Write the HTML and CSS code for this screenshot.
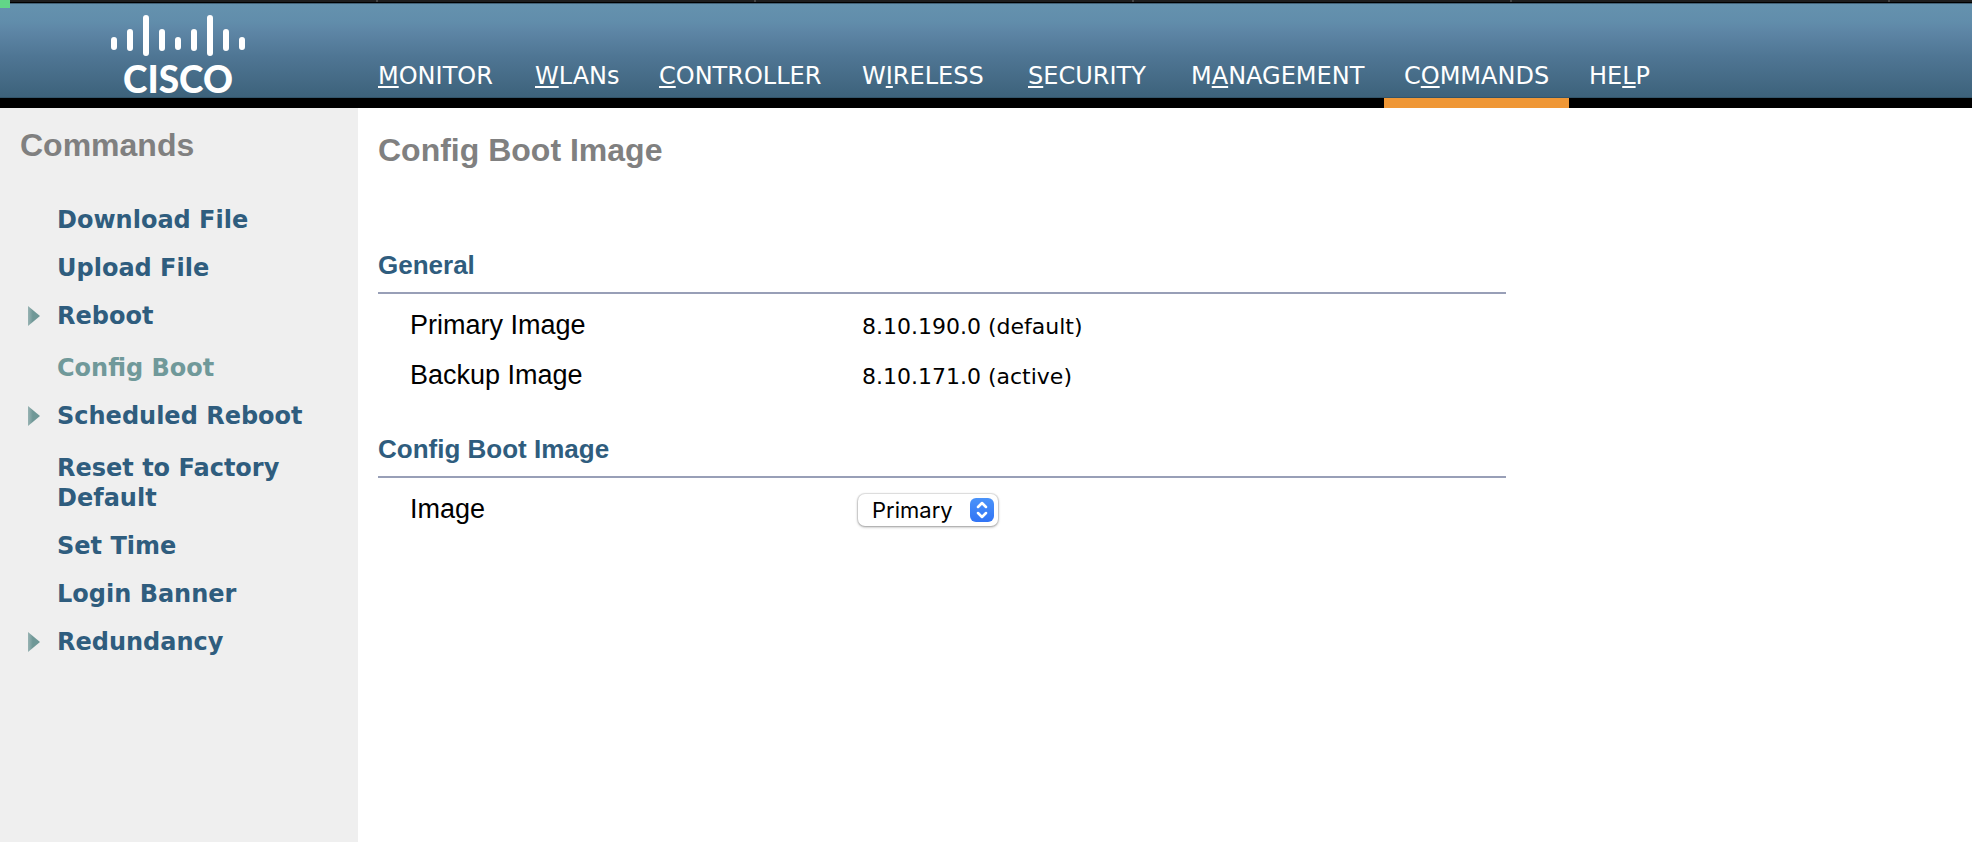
FILE: index.html
```html
<!DOCTYPE html>
<html lang="en">
<head>
<meta charset="utf-8">
<title>Config Boot Image</title>
<link rel="stylesheet" href="styles.css">
</head>
<body>
<div class="window-edge"><span></span><span></span><span></span><span></span><span></span><i class="marker"></i></div>
<header class="banner">
  <div class="brand">
    <svg class="bars" viewBox="0 0 134 46" aria-hidden="true">
      <path d="M3 27v7M19 19v16M35 5v35M51 19v16M67 27v7M83 19v16M99 5v35M115 19v16M131 27v7"/>
    </svg>
    <span class="wordmark">CISCO</span>
  </div>
  <nav class="menu">
    <a href="#"><u>M</u>ONITOR</a>
    <a href="#"><u>W</u>LANs</a>
    <a href="#"><u>C</u>ONTROLLER</a>
    <a href="#">W<u>I</u>RELESS</a>
    <a href="#"><u>S</u>ECURITY</a>
    <a href="#">M<u>A</u>NAGEMENT</a>
    <a href="#" class="active">C<u>O</u>MMANDS</a>
    <a href="#">HE<u>L</u>P</a>
  </nav>
</header>
<div class="page">
  <aside class="sidebar">
    <h2 class="title">Commands</h2>
    <ul class="links">
      <li><a href="#">Download File</a></li>
      <li><a href="#">Upload File</a></li>
      <li class="parent"><a href="#">Reboot</a></li>
      <li class="current"><a href="#">Config Boot</a></li>
      <li class="parent"><a href="#">Scheduled Reboot</a></li>
      <li><a href="#">Reset to Factory Default</a></li>
      <li><a href="#">Set Time</a></li>
      <li><a href="#">Login Banner</a></li>
      <li class="parent"><a href="#">Redundancy</a></li>
    </ul>
  </aside>
  <main class="content">
    <h1 class="title">Config Boot Image</h1>
    <section class="group">
      <h2 class="group-title">General</h2>
      <dl class="fields">
        <dt>Primary Image</dt><dd>8.10.190.0 (default)</dd>
        <dt>Backup Image</dt><dd>8.10.171.0 (active)</dd>
      </dl>
    </section>
    <section class="group">
      <h2 class="group-title">Config Boot Image</h2>
      <div class="fields">
        <label for="image">Image</label>
        <div class="picker">
          <select id="image"><option>Primary</option><option>Backup</option></select>
          <svg class="chevrons" viewBox="0 0 24 24" aria-hidden="true"><path d="M8 9l4-4 4 4M8 15l4 4 4-4"/></svg>
        </div>
      </div>
    </section>
  </main>
</div>
</body>
</html>
```
FILE: styles.css
```css
* { box-sizing: border-box; }
body {
  margin: 0;
  min-height: 100vh;
  display: flex;
  flex-direction: column;
  background: #fff;
  color: #000;
  font-family: "Liberation Sans", Arial, sans-serif;
}
a { color: inherit; text-decoration: none; }

.window-edge {
  position: relative;
  display: flex;
  height: 3px;
  background: #1e1e1e;
  border-bottom: 1px solid #000;
}
.window-edge span { flex: 0 0 378px; border-right: 2px solid #444; }
.marker {
  position: absolute;
  left: 0;
  top: 0;
  z-index: 1;
  width: 10px;
  height: 8px;
  background: #62d688;
}

.banner {
  display: flex;
  border-top: 1px solid #426176;
  background: linear-gradient(#6592ae 0, #618dab 18px, #5d85a5 28px, #4f7694 52px, #3d627b 93px, #284657 94px, #000 94px);
}
.brand {
  flex: 0 0 358px;
  display: flex;
  flex-direction: column;
  padding: 9px 0 0 111px;
}
.bars {
  display: block;
  width: 134px;
  height: 46px;
  fill: none;
  stroke: #fff;
  stroke-width: 6;
  stroke-linecap: round;
}
.wordmark {
  width: 134px;
  color: #fff;
  font: 900 37px/40px Lato, sans-serif;
  text-align: center;
}
.menu {
  display: grid;
  grid-template-columns: 157px 124px 203px 166px 163px 213px 185px 102px;
  color: #fff;
  font: 24px/30px "DejaVu Sans", Verdana, sans-serif;
}
.menu a {
  padding: 57px 0 7px 20px;
  border-bottom: 10px solid #000;
  white-space: nowrap;
}
.menu .active { border-color: #ef9736; }
.menu u { text-decoration-thickness: 2px; text-underline-offset: 2px; text-decoration-skip-ink: none; }

.page { flex: 1; display: flex; }
.title { margin: 0; color: #808080; font-size: 32px; line-height: 36px; }
.sidebar { flex: 0 0 358px; padding: 19px 20px; background: #efefef; }
.links {
  display: flex;
  flex-direction: column;
  gap: 18px;
  margin: 0;
  padding: 42px 0 0;
  list-style: none;
  color: #2f5d7e;
  font: bold 24px/30px "DejaVu Sans", Verdana, sans-serif;
}
.links li { padding-left: 37px; }
.links .current { color: #70999a; }
.links .parent {
  display: flex;
  align-items: center;
  gap: 17px;
  padding: 0 0 4px 8px;
}
.parent::before {
  content: "";
  width: 12px;
  height: 20px;
  background: linear-gradient(90deg, #98b3b3, #6f9897 40%);
  clip-path: polygon(0 0, 100% 50%, 0 100%);
}

.content { flex: 1; padding: 24px 20px; }
.content .title { margin-bottom: 84px; }
.group { max-width: 1128px; margin-bottom: 26px; }
.group-title {
  margin: 0;
  padding-bottom: 14px;
  border-bottom: 2px solid #989fb7;
  color: #2f5d7e;
  font-size: 26px;
  line-height: 26px;
}
.fields {
  display: grid;
  grid-template-columns: 452px 1fr;
  grid-auto-rows: 50px;
  align-items: baseline;
  margin: 0;
  padding: 16px 0 0 32px;
  font-size: 27px;
  line-height: 30px;
}
.fields dd { margin: 0; font: 22px/30px "DejaVu Sans", Verdana, sans-serif; }
.picker {
  position: relative;
  width: 140px;
  margin-left: -4px;
}
.picker select {
  appearance: none;
  display: block;
  width: 100%;
  height: 32px;
  padding: 0 36px 0 14px;
  border: 0;
  border-radius: 7px;
  background: #fff;
  box-shadow: 0 0 1px 1px rgba(0, 0, 0, .1), 0 1px 3px rgba(0, 0, 0, .35);
  color: #000;
  font: 22px/32px Inter, sans-serif;
}
.chevrons {
  position: absolute;
  right: 4px;
  top: 4px;
  width: 24px;
  height: 24px;
  border-radius: 6px;
  background: linear-gradient(#4b93f9, #3174f5);
  fill: none;
  stroke: #fff;
  stroke-width: 2.5;
  stroke-linecap: round;
  stroke-linejoin: round;
  pointer-events: none;
}
```
